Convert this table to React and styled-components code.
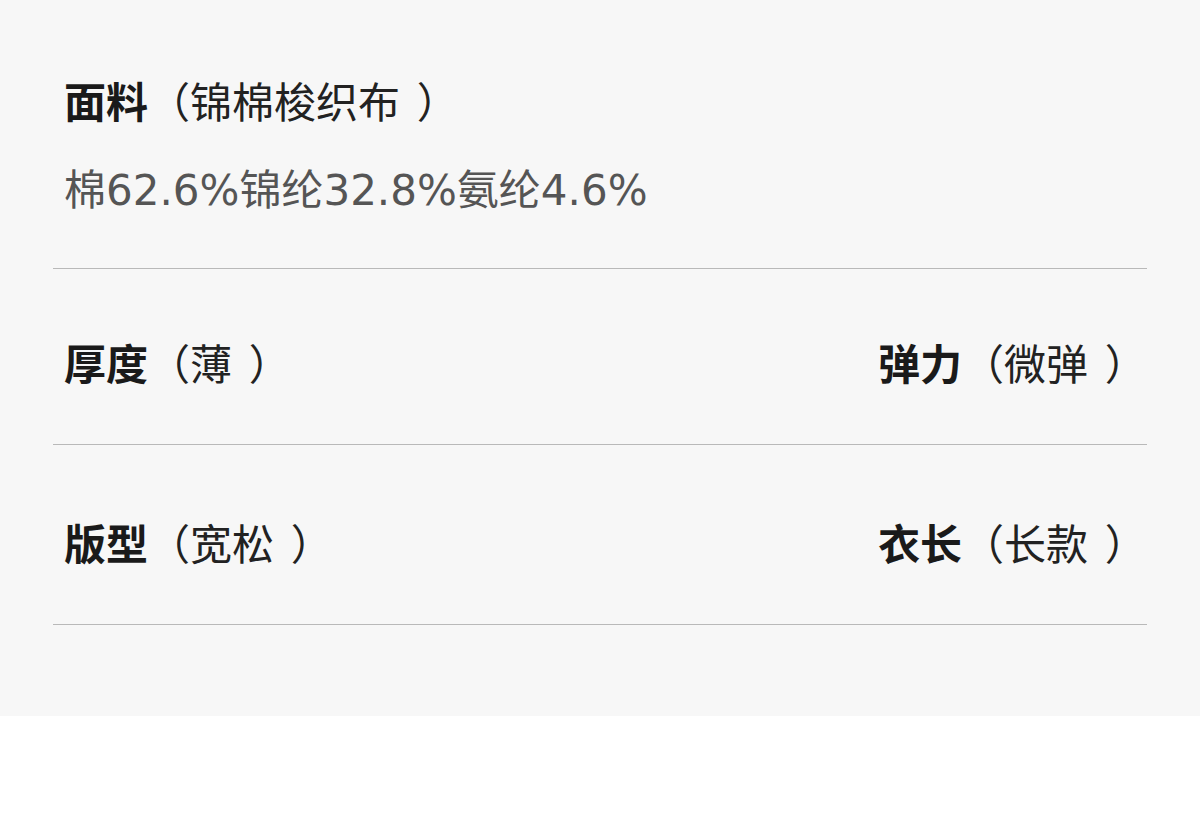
import React from "react";
import styled, { createGlobalStyle } from "styled-components";

const GlobalStyle = createGlobalStyle`
  html, body {
    margin: 0;
    padding: 0;
    background: #ffffff;
  }
  body {
    font-family: "DejaVu Sans", "Noto Sans CJK SC", sans-serif;
  }
`;

const specs = [
  {
    top: 72,
    items: [
      { name: "厚度", value: "薄" },
      { name: "弹力", value: "微弹" },
    ],
  },
  {
    top: 76,
    items: [
      { name: "版型", value: "宽松" },
      { name: "衣长", value: "长款" },
    ],
  },
];

function Attr({ name, value }) {
  return (
    <Label>
      <b>{name}</b>（{value}
      <Close>）</Close>
    </Label>
  );
}

function App() {
  return (
    <>
      <GlobalStyle />
      <Panel>
        <Section>
          <Attr name="面料" value="锦棉梭织布" />
          <Detail>棉62.6%锦纶32.8%氨纶4.6%</Detail>
        </Section>
        {specs.map((row, i) => (
          <Row key={i} $top={row.top}>
            {row.items.map((item) => (
              <Attr key={item.name} name={item.name} value={item.value} />
            ))}
          </Row>
        ))}
      </Panel>
    </>
  );
}

const Panel = styled.div`
  background-color: #f7f7f7;
  height: 716px;
  box-sizing: border-box;
  padding: 0 53px;
`;

const Section = styled.div`
  display: flex;
  flex-direction: column;
  gap: 37px;
  padding: 79px 11px 52px;
  border-bottom: 1px solid #b9b9b9;
`;

const Row = styled.div`
  display: flex;
  justify-content: space-between;
  align-items: center;
  padding: ${({ $top }) => $top}px 17px 53px 11px;
  border-bottom: 1px solid #b9b9b9;
`;

const Label = styled.div`
  font-size: 42px;
  line-height: 50px;
  color: #222222;
  white-space: nowrap;
  b {
    font-weight: 700;
    color: #1a1a1a;
  }
`;

const Close = styled.span`
  display: inline-block;
  margin-left: 0.4em;
  margin-right: -0.4em;
`;

const Detail = styled.div`
  font-size: 42px;
  line-height: 50px;
  color: #555555;
  white-space: nowrap;
`;

export default App;
